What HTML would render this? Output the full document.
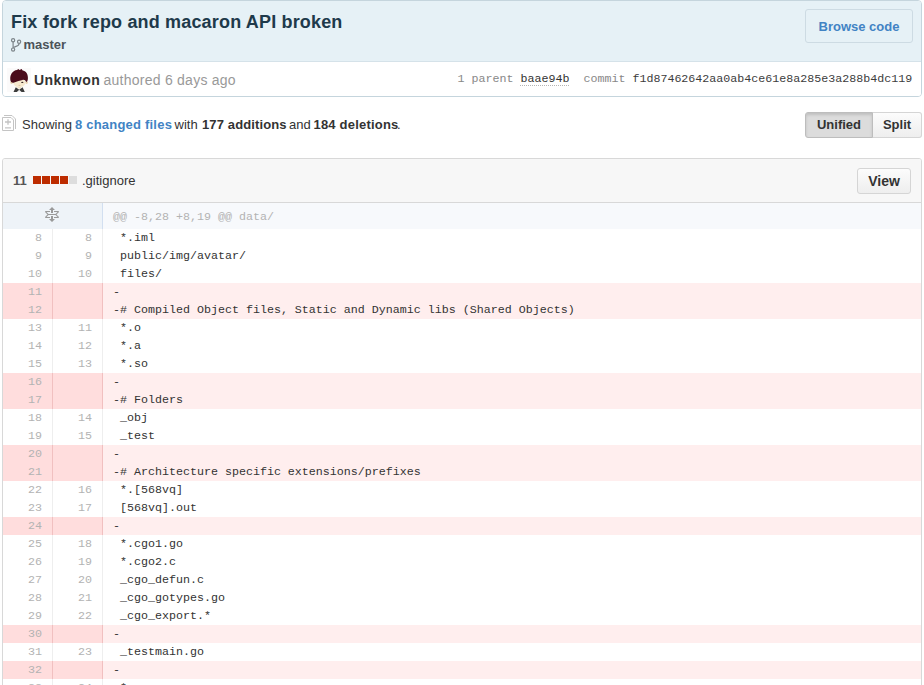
<!DOCTYPE html>
<html><head><meta charset="utf-8">
<style>
*{box-sizing:border-box;margin:0;padding:0}
html,body{width:924px;height:685px;overflow:hidden;background:#fff;font-family:"Liberation Sans",sans-serif;color:#333}
.a{position:absolute;white-space:nowrap}
#commit{position:absolute;left:2px;top:0;width:920px;height:97px;border:1px solid #c5d5dd;border-radius:4px;overflow:hidden}
#chead{position:absolute;left:0;top:0;right:0;height:61px;background:#e6f1f6;border-bottom:1px solid #d5e2e9}
#title{left:8px;top:10px;font-size:18px;font-weight:bold;color:#1e3a4b;line-height:22px;letter-spacing:0.17px}
#branch{left:20.5px;top:36px;font-size:13px;font-weight:bold;color:#4b5359;line-height:16px}
#browse{position:absolute;left:802px;top:8px;width:108px;height:34px;border:1px solid #cddbe3;border-radius:3px;font-size:13px;font-weight:bold;color:#4183c4;line-height:33px;text-align:center;background:#e6f1f6}
#cmeta{position:absolute;left:0;top:62px;right:0;height:34px;background:#fff}
#sha{left:454.5px;top:6.5px;font-family:"Liberation Mono",monospace;font-size:11.67px;line-height:18px;color:#888;white-space:pre}
#sha .d{color:#333}
.bg{position:absolute;top:0;height:26px;font-size:13px;font-weight:bold;line-height:24px;text-align:center;color:#333}
#file{position:absolute;left:2px;top:158px;width:920px;height:600px;border:1px solid #d8d8d8;border-radius:3px;overflow:hidden}
#fhead{position:absolute;left:0;top:0;right:0;height:44px;background:#f7f7f7;border-bottom:1px solid #d8d8d8}
#view{position:absolute;left:854px;top:9px;width:54px;height:26px;border:1px solid #d5d5d5;border-radius:3px;background:linear-gradient(#fcfcfc,#eee);font-size:14px;font-weight:bold;line-height:24px;text-align:center;color:#333}
table{border-collapse:separate;border-spacing:0;position:absolute;left:0;top:44px;width:918px;font-family:"Liberation Mono",monospace;font-size:11.67px;color:#333}
td{height:18px;line-height:18px;white-space:pre;padding:0}
td.n{width:50px;text-align:right;padding-right:10px;color:#b3b3b3;border-right:1px solid #eee}
td.c{padding-left:10px}
tr.h td{height:26px;background:#f7f9fc;color:#b3b3b3}
tr.h td.c{padding-top:1px}
tr.h td.n{background:#eef3f8;border-right:1px solid #d2dff0}
tr.d td.n{background:#ffdddd;border-right:1px solid #f1c0c0}
tr.d td.c{background:#ffeeee}
</style></head><body>
<div id="commit">
  <div id="chead">
    <div id="title" class="a">Fix fork repo and macaron API broken</div>
    <svg class="a" style="left:0;top:0" width="30" height="60" viewBox="0 0 30 60" fill="none" stroke="#7d858a" stroke-width="1.2"><circle cx="10.1" cy="39.2" r="1.6"/><circle cx="16.1" cy="40.8" r="1.6"/><circle cx="10.1" cy="48.6" r="1.6"/><path d="M10.1 40.8V47"/><path d="M16.1 42.4C16.1 45.2 13.2 45.2 10.4 46.4"/></svg>
    <div id="branch" class="a">master</div>
    <div id="browse">Browse code</div>
  </div>
  <div id="cmeta">
    <svg class="a" style="left:4px;top:5px" width="24" height="24" viewBox="0 0 24 24">
      <rect x="0" y="0" width="24" height="24" fill="#fbfafa"/>
      <circle cx="4.6" cy="14.6" r="1.3" fill="#e6d2b0"/><circle cx="19.6" cy="14.6" r="1.3" fill="#e6d2b0"/>
      <rect x="10.5" y="17.5" width="3.5" height="3" fill="#efe0c4"/>
      <ellipse cx="12.3" cy="15" rx="6" ry="4.2" fill="#f6e9cf"/>
      <path d="M6.5 24 L8.8 19.3 L12.2 21.8 L15.6 19.3 L17.8 24 Z" fill="#3c3c3c"/>
      <path d="M9.8 24 L12.2 21.8 L14.6 24 Z" fill="#f2f2f2"/>
      <path d="M3.3 11.8 C2.8 6.5 5.8 2.6 10 2.1 L11.3 0.9 L12.4 2 L14.8 1.1 L15.3 2.3 C19 3 21.3 6.2 20.9 11 C20.7 13 19.9 14 19.1 14 C18.6 12.3 17.2 11.6 15.5 11.9 C13 12.4 10 13.4 7.2 14.6 C5.2 15.2 3.5 14.2 3.3 11.8Z" fill="#4a0c1c"/>
      <ellipse cx="15.3" cy="14.4" rx="1.1" ry="0.7" fill="#3a2a2a"/>
      <path d="M11.6 17.4 H13.4" stroke="#c9a98a" stroke-width="0.6"/>
    </svg>
    <div class="a" style="left:31px;top:8px;font-size:14px;line-height:18px;font-weight:bold;color:#333;letter-spacing:0.45px">Unknwon</div>
    <div class="a" style="left:100.5px;top:8px;font-size:14px;line-height:18px;color:#999;letter-spacing:0.25px">authored 6 days ago</div>
    <div class="a" style="left:517px;top:22px;width:50px;height:1px;background:repeating-linear-gradient(90deg,#b5b5b5 0 1px,transparent 1px 2px)"></div>
    <div id="sha" class="a">1 parent <span class="d">baae94b</span>  commit <span style="color:#3c3c3c">f1d87462642aa0ab4ce61e8a285e3a288b4dc119</span></div>
  </div>
</div>
<svg class="a" style="left:0;top:112px" width="20" height="22" viewBox="0 0 20 22" fill="none" stroke="#c4c4c4" stroke-width="1"><path d="M4 3.5H12L15.5 7V17"/><path d="M2.5 5.5H11L13.5 8V18.5H2.5Z"/><path d="M5 10H11M8 7.2V12.8M5 15.9H11" stroke-width="1.35"/></svg>
<div class="a" style="left:22px;top:117px;font-size:13px;line-height:16px">Showing</div>
<div class="a" style="left:75px;top:117px;font-size:13px;line-height:16px;font-weight:bold;color:#4183c4;letter-spacing:0.21px">8 changed files</div>
<div class="a" style="left:174.5px;top:117px;font-size:13px;line-height:16px">with</div>
<div class="a" style="left:202px;top:117px;font-size:13px;line-height:16px;font-weight:bold;letter-spacing:0.12px">177 additions</div>
<div class="a" style="left:289px;top:117px;font-size:13px;line-height:16px">and</div>
<div class="a" style="left:313.5px;top:117px;font-size:13px;line-height:16px;font-weight:bold;letter-spacing:0.2px">184 deletions</div>
<div class="a" style="left:397px;top:117px;font-size:13px;line-height:16px">.</div>
<div class="a" style="left:805px;top:112px;width:117px;height:26px">
  <div class="bg" style="left:0;width:68px;background:#dcdcdc;border:1px solid #bdbdbd;border-radius:3px 0 0 3px;box-shadow:inset 0 2px 3px rgba(0,0,0,0.13)">Unified</div>
  <div class="bg" style="left:67px;width:50px;background:linear-gradient(#fcfcfc,#eee);border:1px solid #d5d5d5;border-left-color:#bdbdbd;border-radius:0 3px 3px 0">Split</div>
</div>
<div id="file">
  <div id="fhead">
    <div class="a" style="left:10px;top:14px;font-size:13px;font-weight:bold;line-height:16px;color:#555">11</div>
    <div class="a" style="left:30px;top:17px;width:8px;height:8px;background:#bd2c00"></div>
    <div class="a" style="left:39px;top:17px;width:8px;height:8px;background:#bd2c00"></div>
    <div class="a" style="left:48px;top:17px;width:8px;height:8px;background:#bd2c00"></div>
    <div class="a" style="left:57px;top:17px;width:8px;height:8px;background:#bd2c00"></div>
    <div class="a" style="left:66px;top:17px;width:8px;height:8px;background:#ddd"></div>
    <div class="a" style="left:79px;top:14px;font-size:13px;line-height:16px;color:#333">.gitignore</div>
    <div id="view">View</div>
  </div>
  <table id="tbl">
<tr class="h"><td class="n" colspan="2" style="text-align:center;padding:0"><svg width="14" height="16" viewBox="0 0 14 16" style="vertical-align:middle;position:relative;left:-1px;top:-1px"><path fill="#999" d="M11.5 7.5L14 10c0 .55-.45 1-1 1H9v-1h3.5l-2-2h-7l-2 2H5v1H1c-.55 0-1-.45-1-1l2.5-2.5L0 5c0-.55.45-1 1-1h4v1H1.5l2 2h7l2-2H9V4h4c.55 0 1 .45 1 1l-2.5 2.5zM6 6h2V3h2L7 0 4 3h2v3zm2 3H6v3H4l3 3 3-3H8V9z"/></svg></td><td class="c">@@ -8,28 +8,19 @@ data/</td></tr>
<tr><td class="n">8</td><td class="n">8</td><td class="c"> *.iml</td></tr>
<tr><td class="n">9</td><td class="n">9</td><td class="c"> public/img/avatar/</td></tr>
<tr><td class="n">10</td><td class="n">10</td><td class="c"> files/</td></tr>
<tr class="d"><td class="n">11</td><td class="n"></td><td class="c">-</td></tr>
<tr class="d"><td class="n">12</td><td class="n"></td><td class="c">-# Compiled Object files, Static and Dynamic libs (Shared Objects)</td></tr>
<tr><td class="n">13</td><td class="n">11</td><td class="c"> *.o</td></tr>
<tr><td class="n">14</td><td class="n">12</td><td class="c"> *.a</td></tr>
<tr><td class="n">15</td><td class="n">13</td><td class="c"> *.so</td></tr>
<tr class="d"><td class="n">16</td><td class="n"></td><td class="c">-</td></tr>
<tr class="d"><td class="n">17</td><td class="n"></td><td class="c">-# Folders</td></tr>
<tr><td class="n">18</td><td class="n">14</td><td class="c"> _obj</td></tr>
<tr><td class="n">19</td><td class="n">15</td><td class="c"> _test</td></tr>
<tr class="d"><td class="n">20</td><td class="n"></td><td class="c">-</td></tr>
<tr class="d"><td class="n">21</td><td class="n"></td><td class="c">-# Architecture specific extensions/prefixes</td></tr>
<tr><td class="n">22</td><td class="n">16</td><td class="c"> *.[568vq]</td></tr>
<tr><td class="n">23</td><td class="n">17</td><td class="c"> [568vq].out</td></tr>
<tr class="d"><td class="n">24</td><td class="n"></td><td class="c">-</td></tr>
<tr><td class="n">25</td><td class="n">18</td><td class="c"> *.cgo1.go</td></tr>
<tr><td class="n">26</td><td class="n">19</td><td class="c"> *.cgo2.c</td></tr>
<tr><td class="n">27</td><td class="n">20</td><td class="c"> _cgo_defun.c</td></tr>
<tr><td class="n">28</td><td class="n">21</td><td class="c"> _cgo_gotypes.go</td></tr>
<tr><td class="n">29</td><td class="n">22</td><td class="c"> _cgo_export.*</td></tr>
<tr class="d"><td class="n">30</td><td class="n"></td><td class="c">-</td></tr>
<tr><td class="n">31</td><td class="n">23</td><td class="c"> _testmain.go</td></tr>
<tr class="d"><td class="n">32</td><td class="n"></td><td class="c">-</td></tr>
<tr><td class="n">33</td><td class="n">24</td><td class="c"> *.exe</td></tr>
<tr><td class="n">34</td><td class="n">25</td><td class="c"> *.test</td></tr>
  </table>
</div>
</body></html>
